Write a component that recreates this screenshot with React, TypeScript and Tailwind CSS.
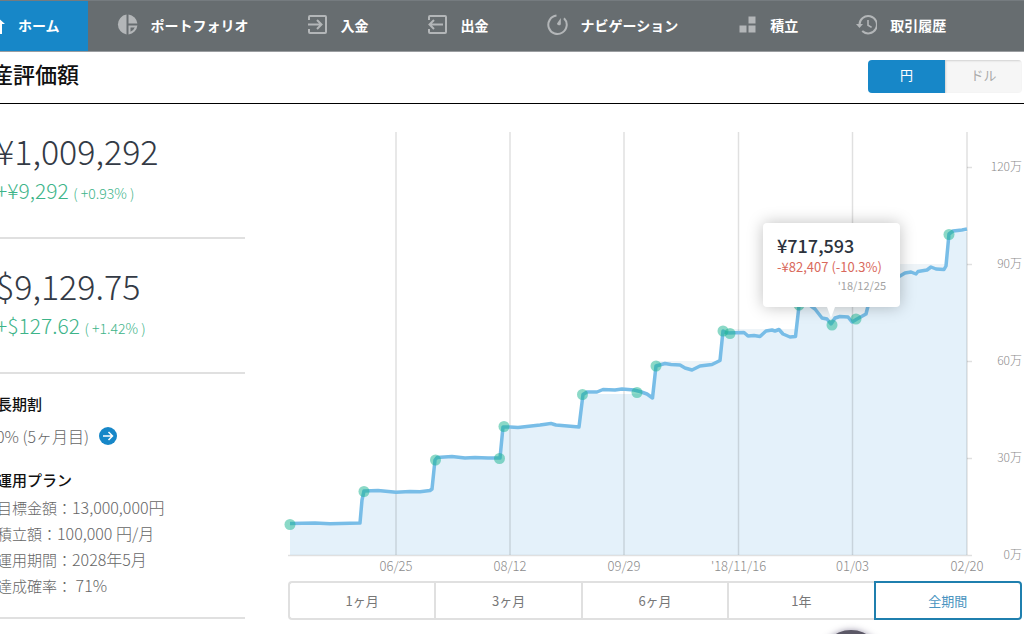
import { useState } from "react";
import type { ReactNode } from "react";

const navItems: { label: string; icon: ReactNode }[] = [
    {
        label: "ポートフォリオ",
        icon: (
            <g fill="currentColor">
                <path d="M9.5 0.6v19.8A10 10 0 0 1 9.5 0.6z" />
                <path d="M11.5 0.6A10 10 0 0 1 20.4 9.5h-8.9z" />
                <path fillRule="evenodd" d="M11.5 11.5h8.9a10 10 0 0 1-8.9 8.9zm2 2v4.3a8 8 0 0 0 4.3-4.3z" />
            </g>
        ),
    },
    {
        label: "入金",
        icon: (
            <g fill="none" stroke="currentColor" strokeWidth="2">
                <path d="M2 6V3a1 1 0 0 1 1-1h15a1 1 0 0 1 1 1v15a1 1 0 0 1-1 1H3a1 1 0 0 1-1-1v-3" />
                <path d="M1 10.500h13M10 6l4.500 4.500L10 15" />
            </g>
        ),
    },
    {
        label: "出金",
        icon: (
            <g fill="none" stroke="currentColor" strokeWidth="2">
                <path d="M2 6V3a1 1 0 0 1 1-1h15a1 1 0 0 1 1 1v15a1 1 0 0 1-1 1H3a1 1 0 0 1-1-1v-3" />
                <path d="M16 10.500H3M7 6l-4.500 4.500L7 15" />
            </g>
        ),
    },
    {
        label: "ナビゲーション",
        icon: (
            <g>
                <path d="M9.500 1.600A9.200 9.200 0 1 0 17 4.200" fill="none" stroke="currentColor" strokeWidth="2" />
                <path d="M13.800 4v6.200a2 2 0 0 1-3.800-.6z" fill="currentColor" />
            </g>
        ),
    },
    {
        label: "積立",
        icon: (
            <g fill="currentColor">
                <path d="M12.500 2.500h7v7h-7zM3.500 11.500h7v7h-7zM12.500 11.500h7v7h-7z" />
            </g>
        ),
    },
    {
        label: "取引履歴",
        icon: (
            <g fill="none" stroke="currentColor" strokeWidth="2">
                <path d="M3.500 11a8.700 8.700 0 1 1 2.700 6" />
                <path d="M12 6v5.200l3.600 2.200" strokeWidth="1.600" />
                <path d="M0 10h7l-3.500 4z" fill="currentColor" stroke="none" />
            </g>
        ),
    },
];

const gridX = [
    { x: 108, label: "06/25" },
    { x: 222, label: "08/12" },
    { x: 336, label: "09/29" },
    { x: 450.5, label: "'18/11/16" },
    { x: 564.5, label: "01/03" },
    { x: 679, label: "02/20" },
];

const gridY = [
    { y: 63, label: "120万" },
    { y: 160, label: "90万" },
    { y: 257, label: "60万" },
    { y: 354, label: "30万" },
    { y: 451, label: "0万" },
];

const valuation =
    "2,419.500 27,419 42,419.700 72,419 74,396 76,387 90,386.500 108,388.300 122,387.500 132,387.700 142,386.500 144,385 147,356 149,353.500 164,352.500 177,354 187,353.500 200,354 212,354 215,323 222,323 230,323.500 252,321 263,319.500 268,321 291,323 295,290.500 299,288 309,288 315,285.500 327,286 334,285 346,286 352,287.500 359,290 364.500,294 368,262 377,259.500 383,260.500 392,261 397,264 404,266 412,262 424,260.500 432,256.500 435,227 439,229 456,228.500 460,232 466,231.500 472,232.500 478,227 484,226 487,227 491,225.500 495,230 502,233 507.500,232.500 511,202 515,198 523,202 527,205 534,214 539,215 543,220 547,214 552,212.500 560,213 564,218 569,215 578,210 580,202 582,178 600,174 612,172 617,169 623,168 628,170 630,167.500 639,166 643,163 648,165 656,165.500 658,162 661,130 665,127 674,126 679,125";

const principal =
    "2,451 2,419 73,419 76,387 144,387 147,354 212,354 215,322 291,322 295,290 365,290 368,257 432,257 435,225 508,225 511,193 579,193 582,160 657,160 661,128 679,128 679,451";

const deposits = [
    [2, 420.5], [76, 387.5], [147.5, 356], [211.5, 354.5], [216, 322.5], [294.5, 290.5], [349, 288.5],
    [368, 262], [435, 227], [442, 229.5], [511, 201], [544, 221], [568, 215], [661, 130.5],
];

const plan = [
    ["目標金額", "13,000,000円"],
    ["積立額", "100,000 円/月"],
    ["運用期間", "2028年5月"],
    ["達成確率", " 71%"],
];

const periods = ["1ヶ月", "3ヶ月", "6ヶ月", "1年", "全期間"];

const Header = () => {
    return (
        <nav className="flex h-[52px] border-t border-b border-t-[#757b7f] border-b-[#9a9da0] bg-[#676d70] text-sm font-bold text-white">
            <a href="#home" className="flex shrink-0 items-center gap-3 bg-[#1787c8] pr-7 pb-[3px]">
                <svg viewBox="0 0 22 22" className="-ml-4 h-[22px] w-[22px]" fill="currentColor">
                    <path d="M11 1l10 9h-3v10h-5v-6H9v6H4V10H1z" />
                </svg>
                ホーム
            </a>
            {navItems.map((item) => (
                <a key={item.label} href={`#${item.label}`} className="flex shrink-0 items-center gap-[13px] px-[29px] pb-[3px]">
                    <svg viewBox="0 0 21 21" className="h-[21px] w-[21px] text-[#b3b6b8]">
                        {item.icon}
                    </svg>
                    {item.label}
                </a>
            ))}
        </nav>
    );
};

const Chart = () => {
    return (
        <div className="relative">
            <svg viewBox="0 0 734 477" className="block w-full overflow-visible" role="img" aria-label="資産評価額の推移">
                <clipPath id="principal">
                    <polygon points={principal} />
                </clipPath>
                <polygon points={principal} fill="#eef4f8" />
                <polygon points={`2,451 ${valuation} 679,451`} fill="#e4f1fa" clipPath="url(#principal)" />
                <g stroke="#000" strokeOpacity="0.12" strokeWidth="1.500">
                    {gridX.map((g) => (
                        <path key={g.x} d={`M${g.x} 28V451`} />
                    ))}
                    <path d="M0 451.500H684M679 63.500h5M679 160.500h5M679 257.500h5M679 354.500h5" />
                </g>
                <polyline points={valuation} fill="none" stroke="#78bde7" strokeWidth="3.500" strokeLinejoin="round" />
                {deposits.map(([x, y]) => (
                    <circle key={x} cx={x} cy={y} r="5.500" fill="#17b390" fillOpacity="0.5" />
                ))}
                <g fill="#8c8c8c" fontSize="13" fontWeight="300" textAnchor="middle">
                    {gridX.map((g) => (
                        <text key={g.x} x={g.x} y="467">{g.label}</text>
                    ))}
                </g>
                <g fill="#8c8c8c" fontSize="12" fontWeight="300" textAnchor="end">
                    {gridY.map((g) => (
                        <text key={g.y} x="734" y={g.y + 4}>{g.label}</text>
                    ))}
                </g>
            </svg>
            <div className="absolute top-[25%] left-[65%] h-[84px] w-[137px] -translate-x-[2px] rounded-sm bg-white px-[14px] pt-[10px] shadow-[0_0_16px_rgba(0,0,0,0.25)]">
                <p className="text-lg leading-6 font-medium text-[#2c323c]">¥717,593</p>
                <p className="text-[13px] leading-5 whitespace-nowrap text-[#d9695c]">-¥82,407 (-10.3%)</p>
                <p className="text-right text-[11px] leading-4 text-[#a3a3a3]">'18/12/25</p>
                <svg viewBox="0 0 8 11" className="absolute top-full left-16 h-[11px] w-2" fill="#fff">
                    <path d="M0 0h8L4 11z" />
                </svg>
            </div>
        </div>
    );
};

export default function App() {
    const [currency, setCurrency] = useState("円");
    const [period, setPeriod] = useState("全期間");

    return (
        <div className="h-screen overflow-hidden bg-white font-['Noto_Sans_CJK_JP',sans-serif]">
            <Header />
            <div className="flex h-[52px] items-center justify-between border-b border-black pr-[2px] pb-[2px]">
                <h1 className="-ml-[9px] pb-2 text-[22px] leading-8 font-medium text-[#111]">産評価額</h1>
                <div className="flex h-[33px] overflow-hidden rounded-sm text-[13px]">
                    {["円", "ドル"].map((c) => (
                        <button
                            key={c}
                            onClick={() => setCurrency(c)}
                            className={currency === c ? "w-[77px] bg-[#1787c8] pb-1 text-white" : "w-[77px] bg-[#f6f6f6] pb-1 text-[#aaa] shadow-[inset_1px_1px_2px_rgba(0,0,0,0.15)]"}
                        >
                            {c}
                        </button>
                    ))}
                </div>
            </div>

            <main className="flex gap-[43px] pr-[2px]">
                <aside className="w-[245px] shrink-0">
                    <section className="h-[135px] border-b-2 border-[#e0e0e0] pt-[26px]">
                        <p className="-ml-1 text-[34px] leading-[42px] font-light text-[#333a45]">¥1,009,292</p>
                        <p className="-ml-1 text-[21px] leading-9 font-light text-[#3db489]">
                            +¥9,292 <span className="text-sm">( +0.93% )</span>
                        </p>
                    </section>
                    <section className="h-[135px] border-b-2 border-[#e0e0e0] pt-[26px]">
                        <p className="-ml-1 text-[34px] leading-[42px] font-light text-[#333a45]">$9,129.75</p>
                        <p className="-ml-1 text-[21px] leading-9 font-light text-[#3db489]">
                            +$127.62 <span className="text-sm">( +1.42% )</span>
                        </p>
                    </section>
                    <section className="h-[245px] border-b-2 border-[#e0e0e0] pt-4 text-[15px] font-light text-[#666]">
                        <h2 className="-ml-[3px] leading-7 font-medium text-[#111]">長期割</h2>
                        <div className="-ml-1 flex items-center gap-[10px] pt-[2px] text-base leading-8">
                            0% (5ヶ月目)
                            <a href="#discount" aria-label="長期割の詳細">
                                <svg viewBox="0 0 18 18" className="h-[18px] w-[18px]">
                                    <circle cx="9" cy="9" r="9" fill="#1787c8" />
                                    <path d="M4 9h9.500M9.500 5l4 4-4 4" fill="none" stroke="#fff" strokeWidth="1.500" />
                                </svg>
                            </a>
                        </div>
                        <h2 className="-ml-[3px] pt-[14px] leading-7 font-medium text-[#111]">運用プラン</h2>
                        <ul className="-ml-[3px] leading-[26px] whitespace-pre">
                            {plan.map(([name, value]) => (
                                <li key={name} className="h-[26px]">{name}：<span className="text-base leading-[26px]">{value}</span></li>
                            ))}
                        </ul>
                    </section>
                </aside>

                <div className="min-w-0 grow">
                    <Chart />
                    <div className="flex text-[13px] text-[#777]">
                        {periods.map((p) => (
                            <button
                                key={p}
                                onClick={() => setPeriod(p)}
                                className={
                                    period === p
                                        ? "h-[39px] grow basis-0 rounded-r-sm border-2 border-[#1f7fae] text-[#4a94c0]"
                                        : "h-[39px] grow basis-0 border-y-2 border-l-2 border-[#e0e0e0] first:rounded-l-sm"
                                }
                            >
                                {p}
                            </button>
                        ))}
                    </div>
                </div>
            </main>

            <button aria-label="ヘルプ" className="fixed right-[141px] -bottom-[60px] h-16 w-16 rounded-full bg-[#5b5866] shadow-[0_0_6px_rgba(60,50,90,0.5)]" />
        </div>
    );
}
